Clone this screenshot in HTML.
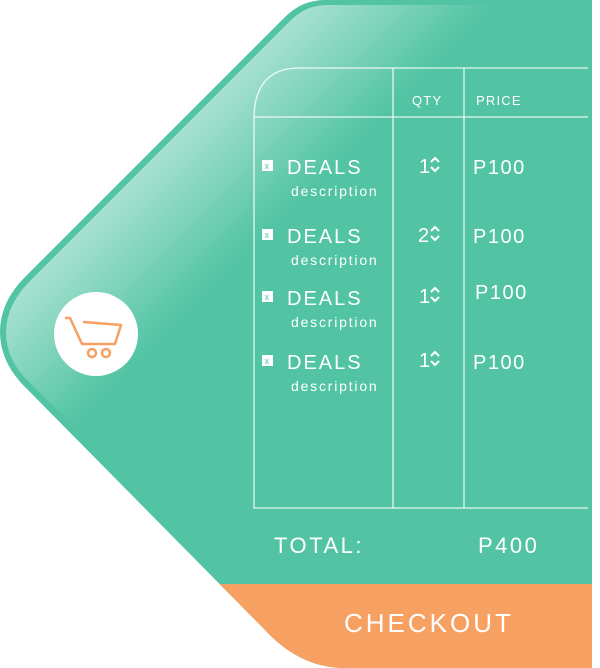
<!DOCTYPE html>
<html><head><meta charset="utf-8"><style>
html,body{margin:0;padding:0;background:#fff;width:600px;height:668px;overflow:hidden}
svg{display:block}
text{font-family:"Liberation Sans",sans-serif;fill:#fff}
</style></head><body>
<svg width="600" height="668" viewBox="0 0 600 668">
<defs>
<linearGradient id="g" x1="150" y1="120" x2="265" y2="235" gradientUnits="userSpaceOnUse">
<stop offset="0" stop-color="#fff" stop-opacity="0.6"/>
<stop offset="1" stop-color="#fff" stop-opacity="0"/>
</linearGradient>
<clipPath id="c"><path d="M592,0 L325,0 Q302,0 285,17 L25,277 Q0,302 0,332 Q0,362 25,387 L265,630 Q300,668 345,668 L592,668 Z"/></clipPath>
</defs>
<g clip-path="url(#c)">
<rect width="600" height="668" fill="#52c4a3"/>
<path d="M592,5 L327,5 Q306,5 290,21 L30,281 Q6,305 6,333 Q6,360 30,383 L300,650 L592,650 Z" fill="url(#g)"/>
<rect x="0" y="584" width="600" height="90" fill="#f6a062"/>
</g>
<g stroke="#fff" stroke-opacity="0.85" stroke-width="1.3" fill="none">
<path d="M588,68 L296,68 Q256,70 254,115 L254,508 L588,508"/>
<line x1="254" y1="117" x2="588" y2="117"/>
<line x1="393" y1="68" x2="393" y2="508"/>
<line x1="464" y1="68" x2="464" y2="508"/>
</g>
<text x="412" y="105" font-size="13" letter-spacing="1.2">QTY</text>
<text x="476" y="105" font-size="13" letter-spacing="1.2">PRICE</text>
<g>
<rect x="262" y="160" width="11" height="11" fill="#fff"/><text x="264.5" y="169" font-size="9" style="fill:#52c4a3">x</text>
<text x="287" y="174" font-size="20" letter-spacing="2">DEALS</text>
<text x="291" y="196" font-size="14" letter-spacing="1.8">description</text>
<text x="419" y="173" font-size="20">1</text>
<path d="M431,162 l4,-4 l4,4 M431,167 l4,4 l4,-4" stroke="#fff" stroke-width="2" fill="none"/>
<text x="473" y="174" font-size="20" letter-spacing="1.5">P100</text>
</g>
<g>
<rect x="262" y="229" width="11" height="11" fill="#fff"/><text x="264.5" y="238" font-size="9" style="fill:#52c4a3">x</text>
<text x="287" y="243" font-size="20" letter-spacing="2">DEALS</text>
<text x="291" y="265" font-size="14" letter-spacing="1.8">description</text>
<text x="418" y="242" font-size="20">2</text>
<path d="M431,231 l4,-4 l4,4 M431,236 l4,4 l4,-4" stroke="#fff" stroke-width="2" fill="none"/>
<text x="473" y="243" font-size="20" letter-spacing="1.5">P100</text>
</g>
<g>
<rect x="262" y="291" width="11" height="11" fill="#fff"/><text x="264.5" y="300" font-size="9" style="fill:#52c4a3">x</text>
<text x="287" y="305" font-size="20" letter-spacing="2">DEALS</text>
<text x="291" y="327" font-size="14" letter-spacing="1.8">description</text>
<text x="419" y="303" font-size="20">1</text>
<path d="M431,292 l4,-4 l4,4 M431,297 l4,4 l4,-4" stroke="#fff" stroke-width="2" fill="none"/>
<text x="475" y="299" font-size="20" letter-spacing="1.5">P100</text>
</g>
<g>
<rect x="262" y="355" width="11" height="11" fill="#fff"/><text x="264.5" y="364" font-size="9" style="fill:#52c4a3">x</text>
<text x="287" y="369" font-size="20" letter-spacing="2">DEALS</text>
<text x="291" y="391" font-size="14" letter-spacing="1.8">description</text>
<text x="419" y="367" font-size="20">1</text>
<path d="M431,356 l4,-4 l4,4 M431,361 l4,4 l4,-4" stroke="#fff" stroke-width="2" fill="none"/>
<text x="473" y="369" font-size="20" letter-spacing="1.5">P100</text>
</g>
<text x="274" y="553" font-size="22" letter-spacing="2.5">TOTAL:</text>
<text x="478" y="553" font-size="22" letter-spacing="2.5">P400</text>
<text x="344" y="632" font-size="26" letter-spacing="3">CHECKOUT</text>
<circle cx="96" cy="334" r="42" fill="#fff"/>
<g stroke="#f6a062" stroke-width="2.5" fill="none" stroke-linejoin="round" stroke-linecap="round">
<path d="M66,318 L70,318 L82,344 L115,344 L121,325 L84,322"/>
<circle cx="92" cy="353" r="4"/>
<circle cx="106" cy="353" r="4"/>
</g>
</svg>
</body></html>
